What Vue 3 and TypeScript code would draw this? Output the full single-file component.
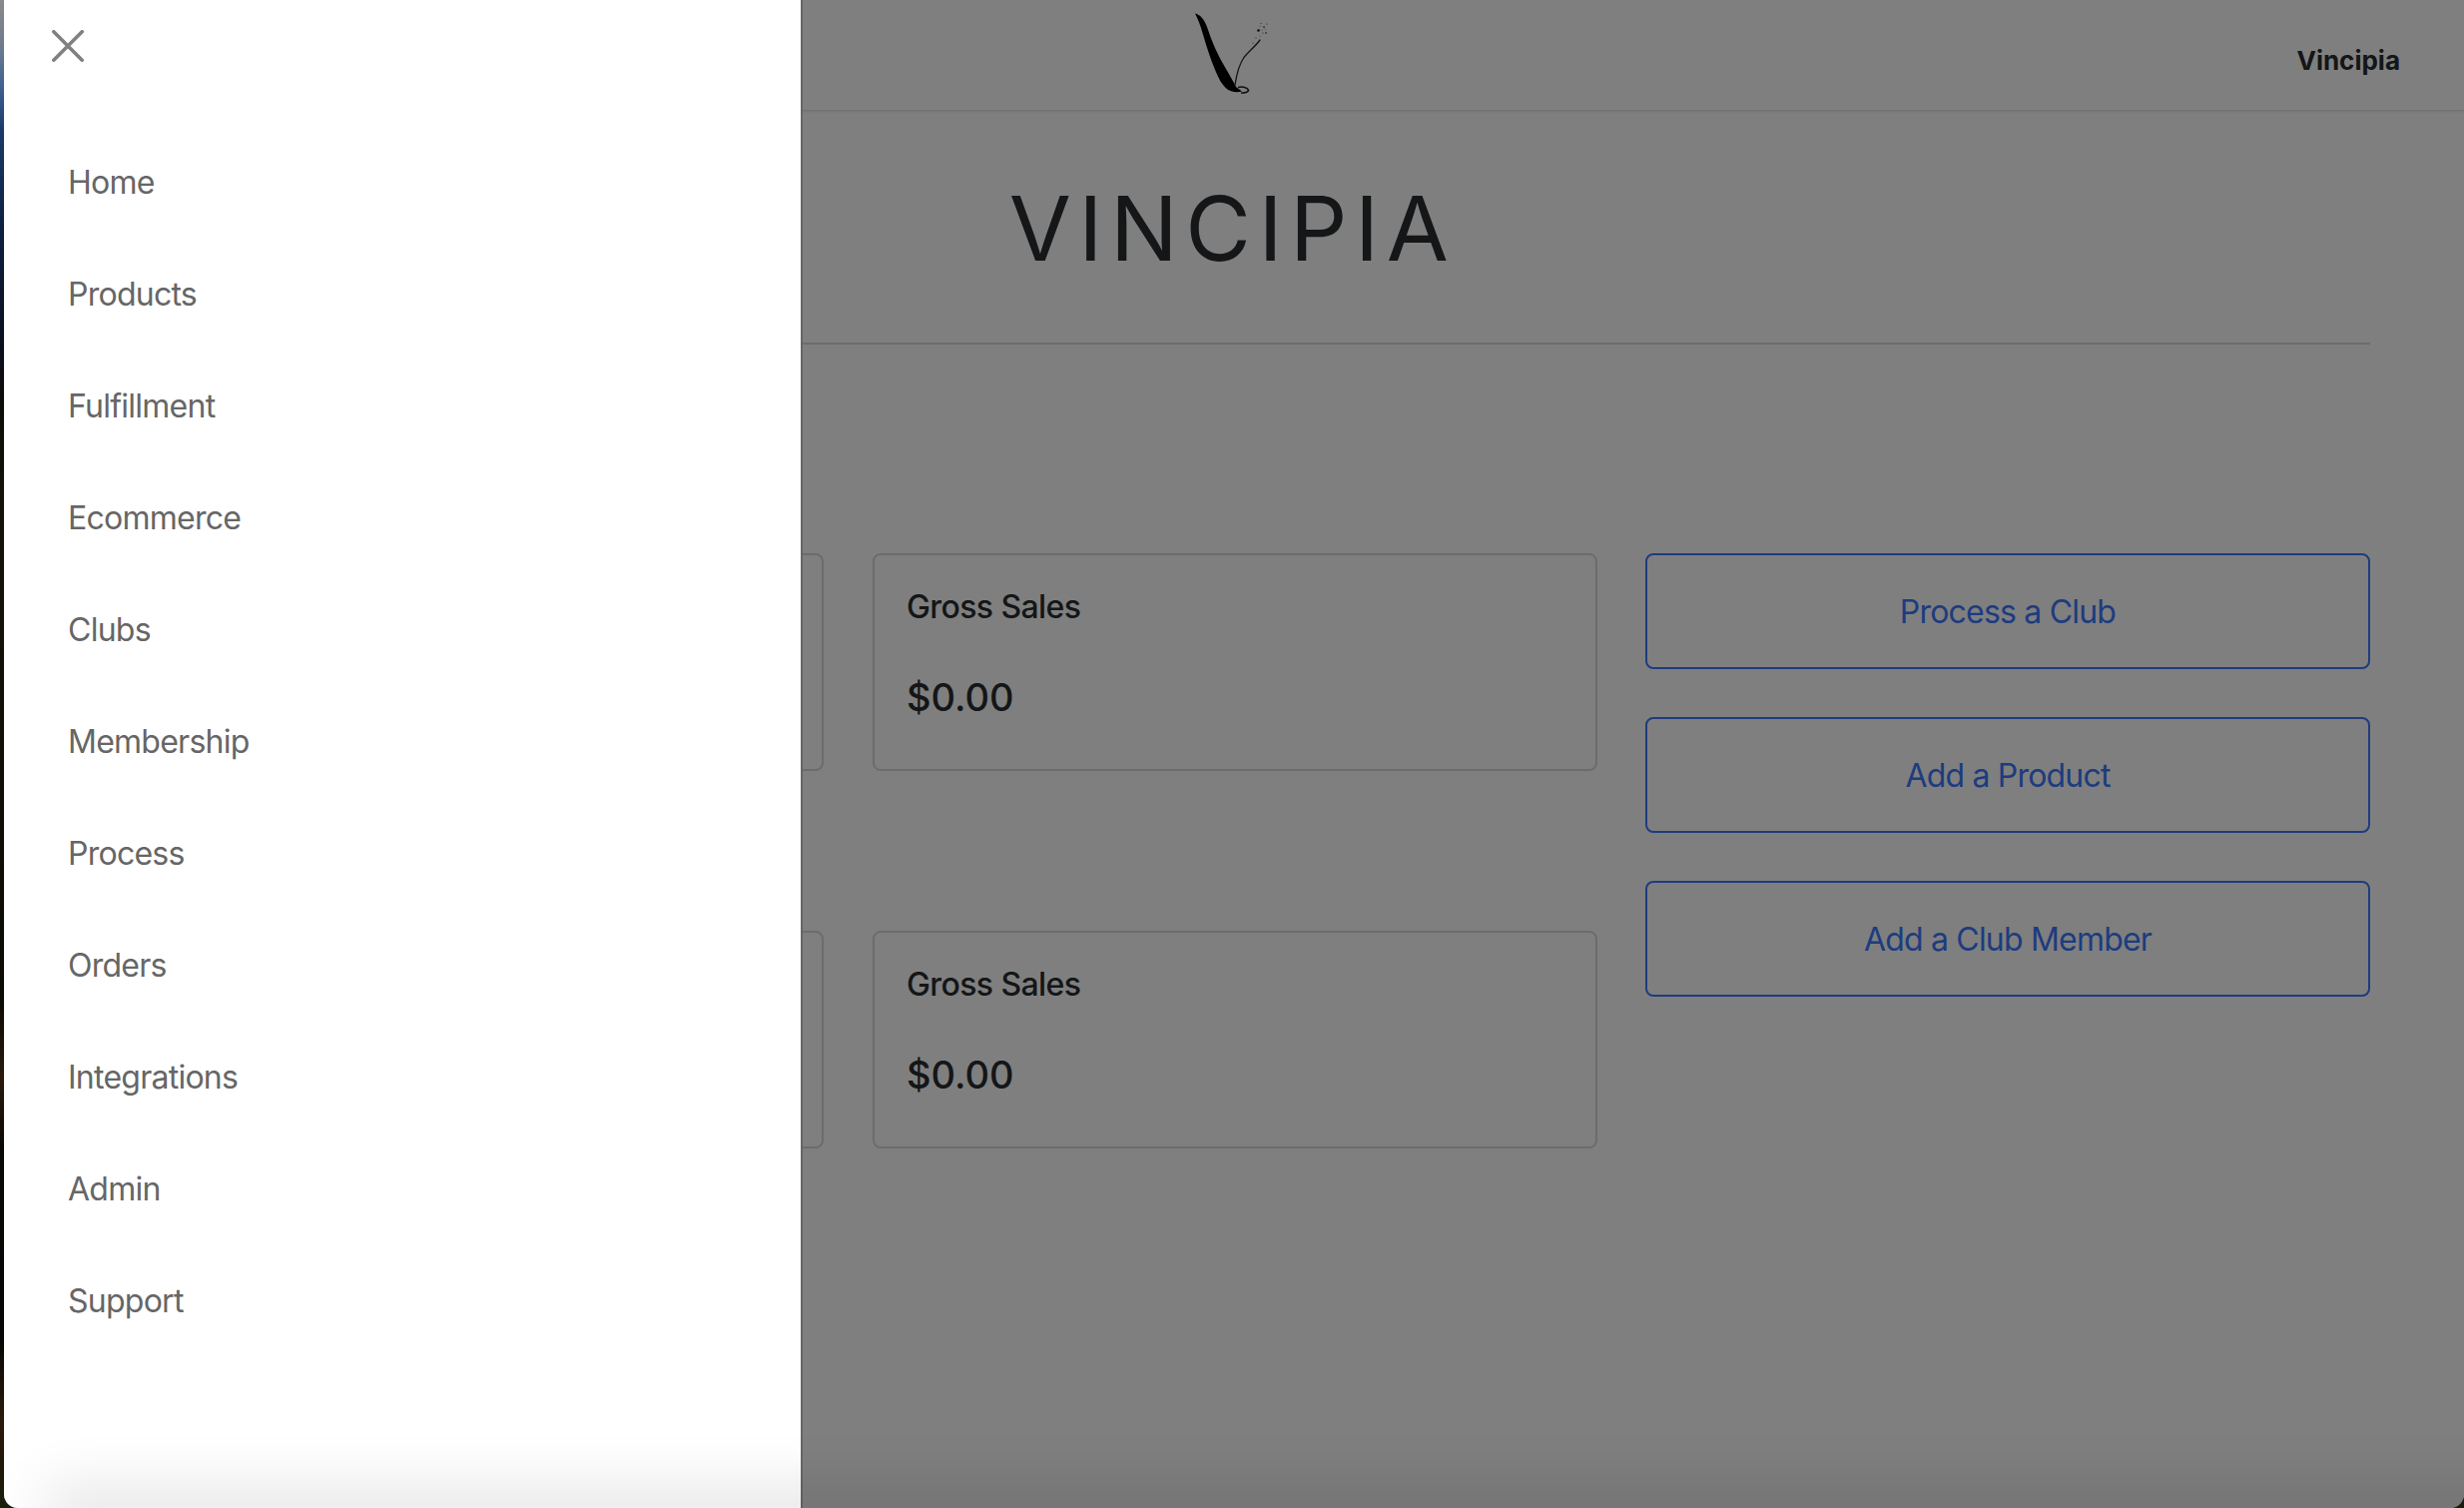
<script setup lang="ts">
const navItems: string[] = ['Home', 'Products', 'Fulfillment', 'Ecommerce', 'Clubs', 'Membership', 'Process', 'Orders', 'Integrations', 'Admin', 'Support']
const actions: string[] = ['Process a Club', 'Add a Product', 'Add a Club Member']
const specks: [number, number, number][] = [[110.5, 30.5, 1.3], [113, 23.5, .5], [116, 27, .8], [118, 33, .8], [112, 26, .4], [108, 38, .5], [105, 43, .5], [119, 24, .5], [115, 33, .5], [112, 36, .4], [117, 29, .4], [114, 30, .4]]
</script>

<template>
  <div class="desktop">
    <div class="window">
      <header class="topbar">
        <svg class="logo" viewBox="0 0 120 110" width="120" height="110" aria-hidden="true">
          <path d="M47 13.500C52 14.500 56 19 59 27C63.500 41 70 56 78 69C82 76 85.500 82 88 87L94 91.500C85 93.500 78.500 91 72.500 81.500C65 67 59.500 50 54.500 33C52.500 26 50 19 47 13.500Z" fill="#000" />
          <path d="M87 85C88.500 75 91.500 64 96 57.500C101 51 107 47 112 40" fill="none" stroke="#222" stroke-width="1.300" stroke-linecap="round" />
          <path d="M90 87.500C93 86.500 99 87 100.500 90C100.500 92.500 96 93.300 93 93" fill="none" stroke="#222" stroke-width="1.600" />
          <circle v-for="(s, i) in specks" :key="i" :cx="s[0]" :cy="s[1]" :r="s[2]" fill="#151515" />
        </svg>
        <span class="brand">Vincipia</span>
      </header>

      <main class="page">
        <h1 class="title">VINCIPIA</h1>
        <div class="grid">
          <section class="metrics">
            <article v-for="n in 4" :key="n" class="card">
              <template v-if="n % 2 === 0">
                <h2>Gross Sales</h2>
                <p>$0.00</p>
              </template>
            </article>
          </section>
          <section class="actions">
            <button v-for="a in actions" :key="a" type="button">{{ a }}</button>
          </section>
        </div>
      </main>

      <div class="scrim"></div>

      <aside class="drawer">
        <button class="close" type="button" aria-label="Close">
          <svg viewBox="0 0 32 32" width="32" height="32" aria-hidden="true">
            <path d="M1.800 1.800L30.200 30.200M30.200 1.800L1.800 30.200" stroke="#808080" stroke-width="3.600" stroke-linecap="round" fill="none" />
          </svg>
        </button>
        <nav class="nav">
          <a v-for="item in navItems" :key="item" href="#">{{ item }}</a>
        </nav>
      </aside>

      <div class="edge-shadow"></div>
    </div>
  </div>
</template>

<style>
html, body { margin: 0; padding: 0; }
</style>

<style scoped>
.desktop {
  height: 1510px;
  padding-left: 4px;
  box-sizing: border-box;
  background: linear-gradient(180deg, #8a8a8a 0, #6a7a8f 50px, #3c5f90 90px, #1c3a68 130px, #0e2244 220px, #0a1020 340px, #0c0c08 400px, #141208 500px, #0c0a04 1000px, #2a1a0c 1080px, #0a0804 1150px, #060604 1340px, #2a1a0c 1420px, #241608 1465px, #14200c 1510px);
  font-family: Inter, "Liberation Sans", sans-serif;
}
.window {
  position: relative;
  height: 100%;
  overflow: hidden;
  background: #fff;
  border-radius: 0 0 14px 14px;
  color: #282c30;
}
.topbar {
  display: flex;
  align-items: flex-start;
  height: 110px;
  box-sizing: border-box;
  padding-left: 1146px;
  padding-right: 64px;
  box-shadow: 0 1px 3px rgba(0, 0, 0, .18);
}
.logo { display: block; }
.brand {
  margin-left: auto;
  margin-top: 44px;
  font-size: 26px;
  line-height: 34px;
  font-weight: 700;
}
.page { padding: 0 94px 0 95px; }
.title {
  margin: 0;
  height: 235px;
  box-sizing: border-box;
  padding: 74px 4px 0 0;
  border-bottom: 2px solid #d8d8d8;
  text-align: center;
  font-size: 90px;
  line-height: 90px;
  font-weight: 400;
  letter-spacing: 7.500px;
}
.grid {
  display: grid;
  grid-template-columns: 1500px 726px;
  column-gap: 49px;
  margin-top: 209px;
}
.metrics {
  display: grid;
  grid-template-columns: 726px 726px;
  column-gap: 49px;
  row-gap: 160px;
  align-content: start;
}
.card {
  height: 218px;
  box-sizing: border-box;
  padding: 32px 32px 0;
  border: 2px solid #d8d8d8;
  border-radius: 8px;
}
.card h2 {
  margin: 0;
  font-size: 32px;
  line-height: 40px;
  font-weight: 500;
  letter-spacing: -.6px;
}
.card p {
  margin: 47px 0 0;
  font-size: 38px;
  line-height: 46px;
  font-weight: 500;
}
.actions {
  display: flex;
  flex-direction: column;
  gap: 48px;
}
.actions button {
  height: 116px;
  padding: 0;
  border: 2px solid #3a78ff;
  border-radius: 8px;
  background: transparent;
  color: #3a78ff;
  font-family: inherit;
  font-size: 32px;
  font-weight: 400;
  letter-spacing: -.8px;
}
.scrim {
  position: absolute;
  inset: 0;
  background: rgba(0, 0, 0, .5);
}
.drawer {
  position: absolute;
  top: 0;
  bottom: 0;
  left: 0;
  width: 800px;
  box-sizing: border-box;
  border-right: 2px solid #666;
  background: #fff;
}
.close {
  position: absolute;
  top: 30px;
  left: 48px;
  display: block;
  width: 32px;
  height: 32px;
  padding: 0;
  border: 0;
  background: none;
}
.close svg { display: block; }
.nav {
  display: flex;
  flex-direction: column;
  padding: 127px 0 0 64px;
}
.nav a {
  height: 112px;
  line-height: 112px;
  font-size: 32px;
  letter-spacing: -.75px;
  color: #666;
  text-decoration: none;
}
.edge-shadow {
  position: absolute;
  left: 60px;
  right: -100px;
  bottom: -12px;
  height: 12px;
  box-shadow: 0 0 60px 18px rgba(0, 0, 0, .12);
  pointer-events: none;
}
</style>
